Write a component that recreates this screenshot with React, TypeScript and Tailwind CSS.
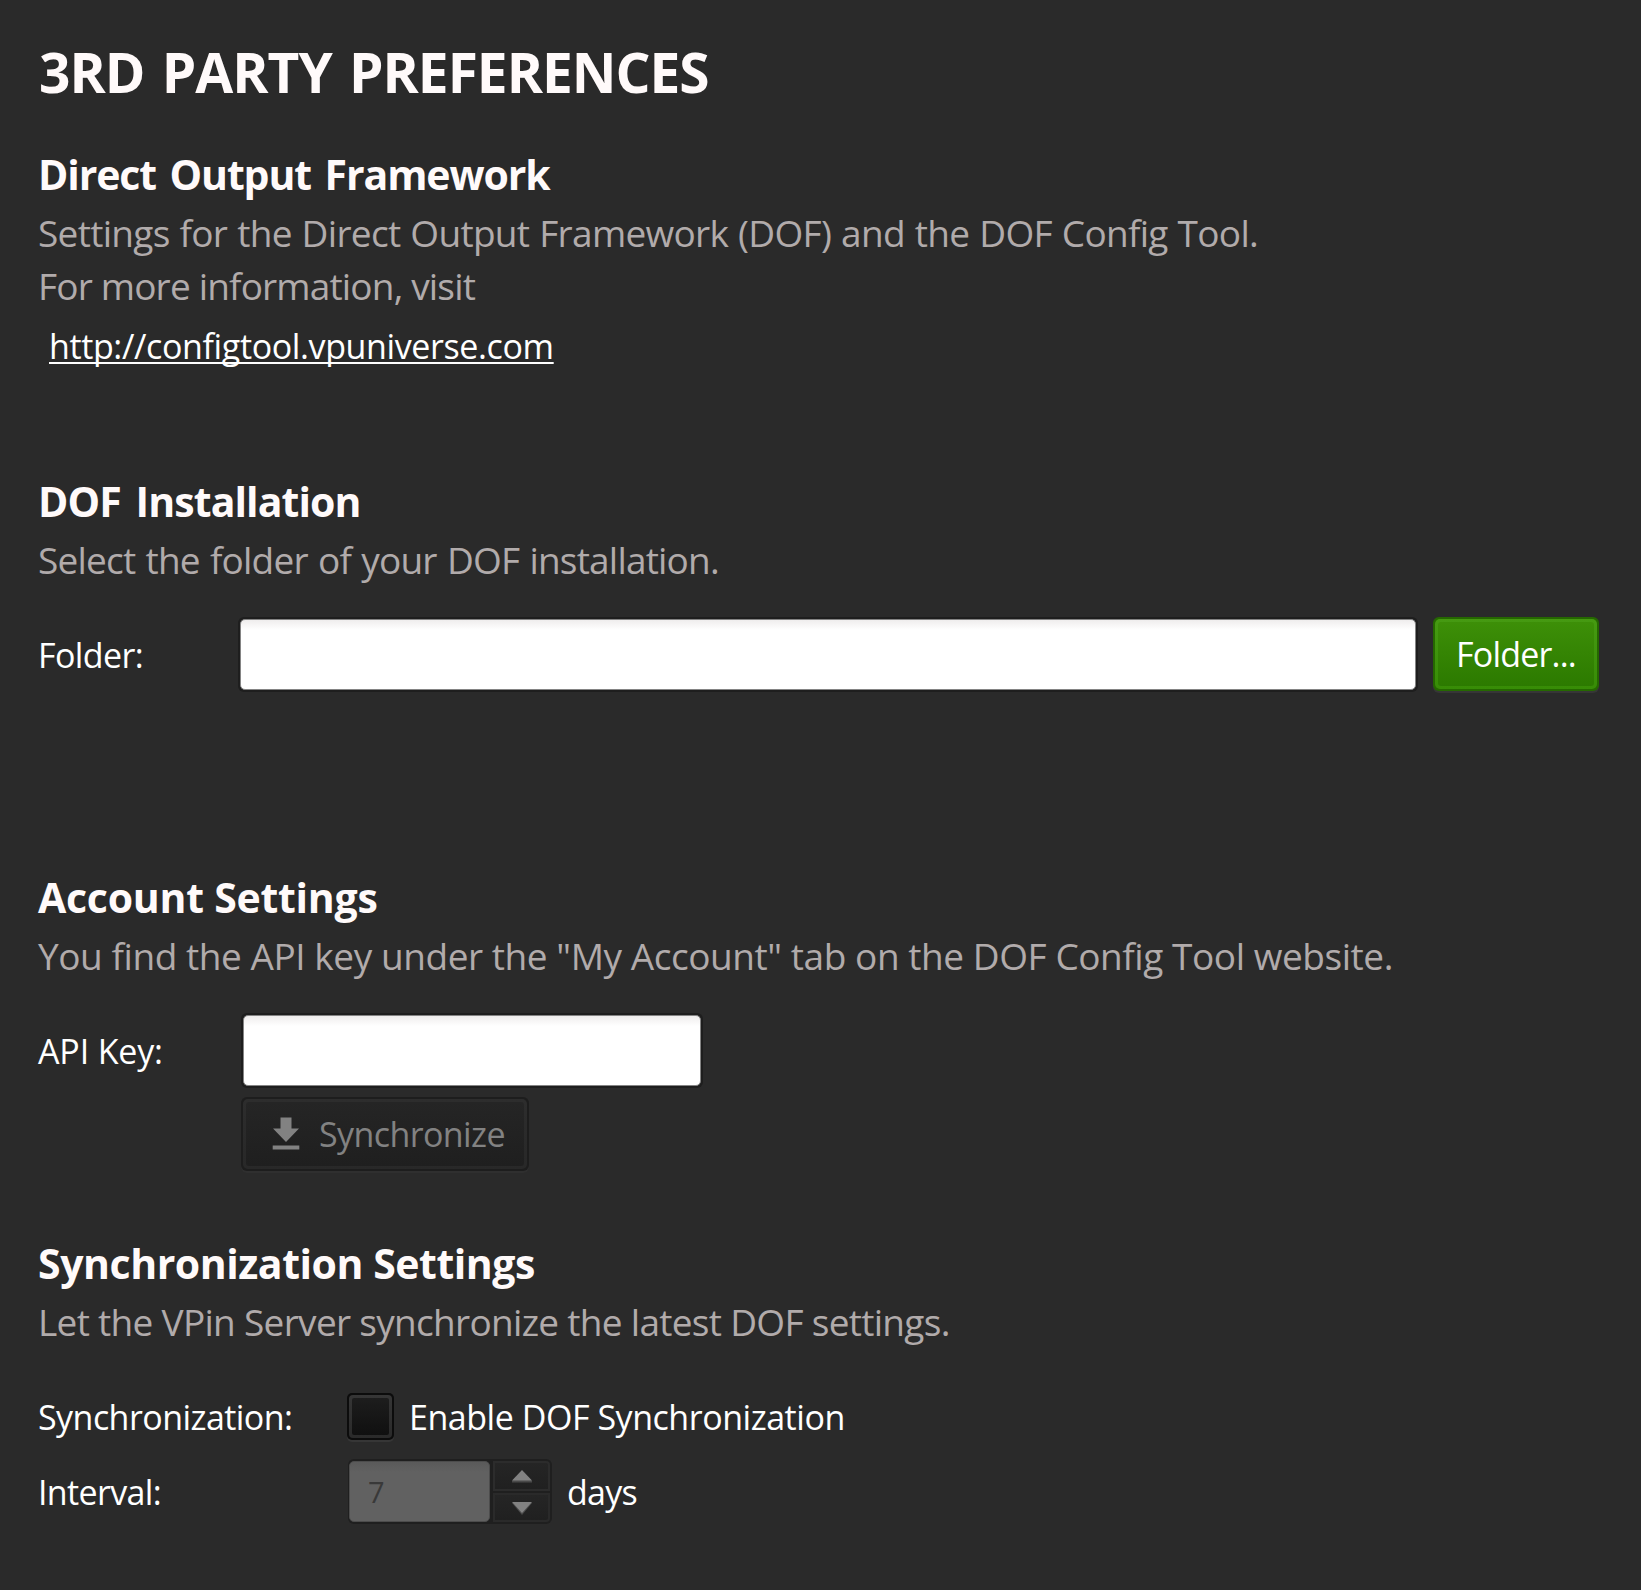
import type { ReactNode } from "react";

type SectionProps = {
  title: string;
  titleClass: string;
  className: string;
  children: ReactNode;
};

function Section({ title, titleClass, className, children }: SectionProps) {
  return (
    <section className={className}>
      <h2 className={`mb-[3px] whitespace-nowrap text-[41px] leading-[60px] font-bold text-[#fffafa] ${titleClass}`}>
        {title}
      </h2>
      {children}
    </section>
  );
}

function Note({ className, children }: { className: string; children: ReactNode }) {
  return <p className={`whitespace-nowrap text-[37px] leading-[52px] text-[#b1abab] ${className}`}>{children}</p>;
}

function TextField({ className }: { className: string }) {
  return (
    <div className={`h-[75px] rounded-[6px] bg-[#1e1e1e] p-[2px] ${className}`}>
      <input
        type="text"
        className="block h-full w-full rounded-[5px] border border-[#848484] bg-white bg-linear-to-b from-[#efeded] to-white to-[10px] outline-none"
      />
    </div>
  );
}

function DownloadIcon() {
  return (
    <svg width="28" height="34" viewBox="0 0 28 34" fill="#828282" aria-hidden="true">
      <path d="M8.5 0.5h11v11h7.5L14 25 1 11.500h7.500z" />
      <path d="M0.700 28.500h26.600v4H0.700z" />
    </svg>
  );
}

function SpinnerArrow({ down = false }: { down?: boolean }) {
  return (
    <svg width="20" height="13" viewBox="0 0 20 13" className={down ? "mt-[3px]" : "mt-px"} aria-hidden="true">
      {down ? (
        <>
          <path d="M0 1h20L10 13z" fill="#4a4a4a" />
          <path d="M0 0h20L10 11z" fill="#828282" />
        </>
      ) : (
        <>
          <path d="M0 12.500V11L10 2l10 9v1.500z" fill="#4a4a4a" />
          <path d="M10 0l10 10.500H0z" fill="#828282" />
        </>
      )}
    </svg>
  );
}

export default function App() {
  return (
    <main className="h-[1590px] w-[1641px] overflow-hidden bg-[#2a2a2a] pt-[42px] pl-[38px] font-['Open_Sans',sans-serif] text-[34px] leading-[46px] text-white">
      <h1 className="mb-[42px] pl-px text-[55px] leading-[60px] font-bold tracking-[-1px] text-[#fffafa] [word-spacing:4px]">
        3RD PARTY PREFERENCES
      </h1>

      <Section title="Direct Output Framework" titleClass="tracking-[-1.1px] [word-spacing:4px]" className="h-[327px]">
        <Note className="tracking-[-0.7px] [word-spacing:1px]">
          Settings for the Direct Output Framework (DOF) and the DOF Config Tool.
        </Note>
        <Note className="mt-px tracking-[-0.83px]">For more information, visit</Note>
        <a
          href="#configtool"
          className="mt-[11px] ml-[11px] inline-block tracking-[-0.38px] underline decoration-2 underline-offset-[3px] [text-decoration-skip-ink:none]"
        >
          http://configtool.vpuniverse.com
        </a>
      </Section>

      <Section title="DOF Installation" titleClass="tracking-[-0.9px] [word-spacing:5px]" className="h-[396px]">
        <Note className="tracking-[-0.8px] [word-spacing:1.4px]">Select the folder of your DOF installation.</Note>
        <div className="mt-[31px] flex items-center">
          <label className="w-[200px] tracking-[-0.6px]">Folder:</label>
          <TextField className="w-[1180px]" />
          <button className="ml-[15px] h-[74px] w-[166px] self-start rounded-[6px] bg-[#256800] p-[2px] shadow-[0_2px_0_#363636]">
            <span className="block h-full rounded-[5px] bg-linear-to-b from-[#469a12] to-[#378c06] p-[3px]">
              <span className="flex h-full items-center justify-center rounded-[3px] bg-linear-to-b from-[#3d8f08] to-[#2c7a00] tracking-[-0.8px]">
                Folder...
              </span>
            </span>
          </button>
        </div>
      </Section>

      <Section title="Account Settings" titleClass="tracking-[-0.25px]" className="h-[366px]">
        <Note className="tracking-[-0.44px]">
          You find the API key under the "My Account" tab on the DOF Config Tool website.
        </Note>
        <div className="mt-[31px] flex items-center">
          <label className="w-[203px] tracking-[-0.16px]">API Key:</label>
          <TextField className="w-[462px]" />
        </div>
        <button
          disabled
          className="mt-[9px] ml-[203px] block h-[74px] w-[288px] rounded-[6px] bg-[#1d1d1d] p-[2px] text-[#828282] shadow-[0_2px_0_#2f2f2f]"
        >
          <span className="block h-full rounded-[5px] bg-linear-to-b from-[#2d2d2d] to-[#282828] p-[3px]">
            <span className="flex h-full items-center rounded-[3px] bg-linear-to-b from-[#252525] to-[#1f1f1f] pl-[26px]">
              <DownloadIcon />
              <span className="ml-[19px] tracking-[-0.6px]">Synchronize</span>
            </span>
          </span>
        </button>
      </Section>

      <Section title="Synchronization Settings" titleClass="tracking-[-0.45px]" className="h-[340px]">
        <Note className="tracking-[-0.7px]">Let the VPin Server synchronize the latest DOF settings.</Note>
        <div className="mt-[45px] flex items-center">
          <span className="w-[309px] tracking-[-0.55px]">Synchronization:</span>
          <span
            role="checkbox"
            aria-checked="false"
            className="size-[47px] rounded-[5px] bg-[#0c0c0c] p-[2px] shadow-[0_2px_0_#363636]"
          >
            <span className="block size-full rounded-[4px] bg-linear-to-b from-[#363636] to-[#2a2a2a] p-[3px]">
              <span className="block size-full rounded-[2px] bg-linear-to-b from-[#1d1d1d] to-[#101010]" />
            </span>
          </span>
          <span className="ml-[15px] tracking-[-0.46px]">Enable DOF Synchronization</span>
        </div>
        <div className="mt-[19px] flex items-center">
          <span className="w-[310px] tracking-[-0.65px]">Interval:</span>
          <div className="flex h-[65px] w-[204px] rounded-[6px] bg-[#1f1f1f]">
            <div className="flex w-[145px] items-center py-[2px] pl-[1px]">
              <div className="flex h-full w-[141px] items-center rounded-[5px] border border-[#4c4c4c] bg-[#616161] bg-linear-to-b from-[#5a5a5a] to-[#616161] to-[10px] pl-[18px] text-[29px] text-[#393939]">
                7
              </div>
            </div>
            <div className="flex flex-1 flex-col gap-[2px] py-[2px] pr-[2px]">
              <div className="flex flex-1 items-center justify-center rounded-tr-[4px] border-2 border-[#2c2c2c] bg-linear-to-b from-[#252525] to-[#202020]">
                <SpinnerArrow />
              </div>
              <div className="flex flex-1 items-center justify-center rounded-br-[4px] border-2 border-[#2a2a2a] bg-linear-to-b from-[#252525] to-[#202020]">
                <SpinnerArrow down />
              </div>
            </div>
          </div>
          <span className="ml-[15px] tracking-[-0.77px]">days</span>
        </div>
      </Section>
    </main>
  );
}
